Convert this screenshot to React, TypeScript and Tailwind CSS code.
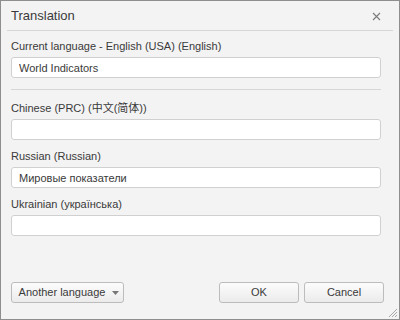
import React from "react";

const Field = ({ label, value }: { label: string; value?: string }) => (
  <div className="flex flex-col">
    <label className="text-[11px] leading-[14px] text-[#3a3a3a]">{label}</label>
    <input
      className="mt-[4px] h-[21px] w-full rounded-[3px] border border-[#d0d0d0] bg-white px-[7px] text-[11px] text-[#3a3a3a] outline-none"
      defaultValue={value}
    />
  </div>
);

const App = () => {
  return (
    <div
      className="flex h-[320px] w-[400px] flex-col border border-[#8e8e8e] bg-[#f3f3f3]"
      style={{ fontFamily: '"Liberation Sans", Arial, "Noto Sans CJK SC", sans-serif' }}
    >
      {/* header */}
      <div className="mx-[6px] flex h-[30px] items-center justify-between border-b border-[#d6d6d6] pl-[4px] pr-[12px]">
        <span className="text-[13px] text-[#3a3a3a]">Translation</span>
        <svg width="9" height="9" viewBox="0 0 9 9" className="mt-[1px]">
          <path d="M1 1 L8 8 M8 1 L1 8" stroke="#7a7a7a" strokeWidth="1.1" />
        </svg>
      </div>

      {/* body */}
      <div className="flex flex-col pl-[10px] pr-[18px] pt-[8px]">
        <Field label="Current language - English (USA) (English)" value="World Indicators" />
        <div className="mt-[11px] h-px bg-[#d6d6d6]" />
        <div className="mt-[11px] flex flex-col gap-[9px]">
          <Field label="Chinese (PRC) (中文(简体))" />
          <Field label="Russian (Russian)" value="Мировые показатели" />
          <Field label="Ukrainian (українська)" />
        </div>
      </div>

      {/* footer */}
      <div className="mt-auto flex items-center pb-[16px] pl-[10px] pr-[15px]">
        <button className="flex h-[21px] w-[113px] items-center justify-center gap-[7px] whitespace-nowrap rounded-[3px] border border-[#bcbcbc] bg-gradient-to-b from-[#fcfcfc] to-[#ebebeb] pl-[3px] text-[11px] text-[#3a3a3a]">
          Another language
          <svg width="7" height="4" viewBox="0 0 7 4" className="shrink-0">
            <path d="M0 0 H7 L3.5 4 Z" fill="#777" />
          </svg>
        </button>
        <div className="ml-auto flex gap-[5px]">
          <button className="h-[21px] w-[80px] rounded-[3px] border border-[#bcbcbc] bg-gradient-to-b from-[#fcfcfc] to-[#ebebeb] text-[11px] text-[#3a3a3a]">
            OK
          </button>
          <button className="h-[21px] w-[80px] rounded-[3px] border border-[#bcbcbc] bg-gradient-to-b from-[#fcfcfc] to-[#ebebeb] text-[11px] text-[#3a3a3a]">
            Cancel
          </button>
        </div>
      </div>

      {/* resize grip */}
      <div className="relative">
        <svg width="11" height="11" viewBox="0 0 11 11" className="absolute bottom-[1px] right-[1px]">
          <path d="M10 2 L2 10 M10 5 L5 10 M10 8 L8 10" stroke="#a8a8a8" strokeWidth="1" />
        </svg>
      </div>
    </div>
  );
};

export default App;
